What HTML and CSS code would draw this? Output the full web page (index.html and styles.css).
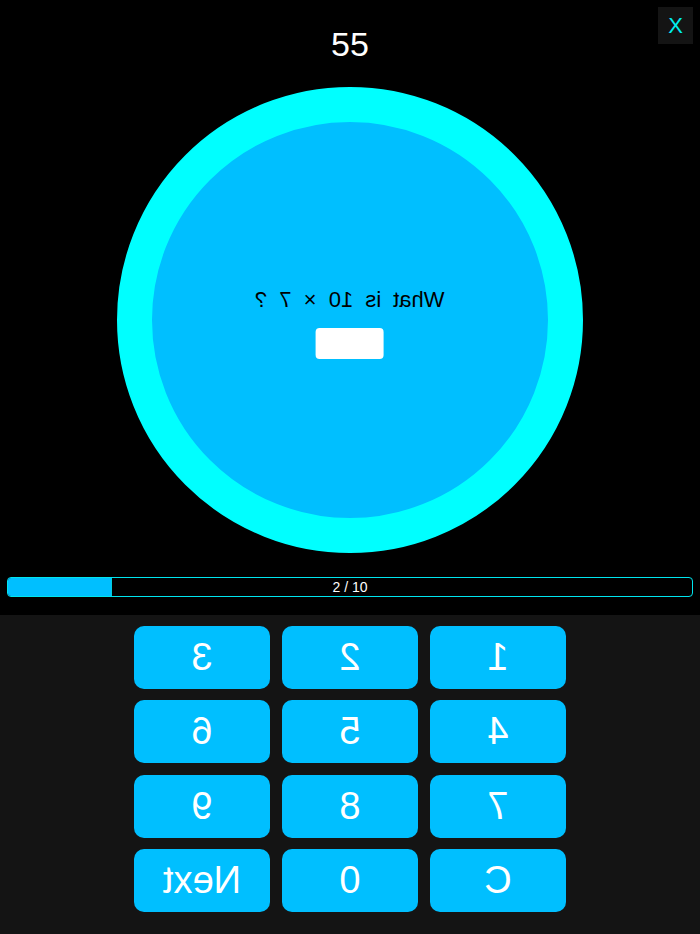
FILE: index.html
```
<!DOCTYPE html>
<html>
<head>
<meta charset="utf-8">
<link rel="stylesheet" href="styles.css">
</head>
<body>
<div class="app">
  <div class="top">
    <header class="header">
      <div class="score">55</div>
      <button class="close">X</button>
    </header>
    <div class="ring">
      <div class="ring-content">
        <div class="question">What is 10 × 7 ?</div>
        <div class="answer"></div>
      </div>
    </div>
    <div class="progress">
      <div class="progress-fill" style="width: 15%"></div>
      <div class="progress-label">2 / 10</div>
    </div>
  </div>
  <div class="keypad">
    <div class="keys">
      <button class="key">1</button>
      <button class="key">2</button>
      <button class="key">3</button>
      <button class="key">4</button>
      <button class="key">5</button>
      <button class="key">6</button>
      <button class="key">7</button>
      <button class="key">8</button>
      <button class="key">9</button>
      <button class="key">C</button>
      <button class="key">0</button>
      <button class="key">Next</button>
    </div>
  </div>
</div>
</body>
</html>
```
FILE: styles.css
```
html, body {
  margin: 0;
  padding: 0;
  background: #000;
  font-family: "Liberation Sans", Arial, sans-serif;
}

.app {
  width: 700px;
  height: 934px;
  display: flex;
  flex-direction: column;
  overflow: hidden;
}

.top {
  height: 615px;
  display: flex;
  flex-direction: column;
  align-items: center;
  background: #000;
  position: relative;
}

.header {
  height: 87px;
  width: 100%;
  display: flex;
  align-items: center;
  justify-content: center;
}

.score {
  color: #fff;
  font-size: 34px;
  line-height: 40px;
}

.close {
  position: absolute;
  top: 7px;
  right: 7px;
  width: 35px;
  height: 37px;
  padding: 0;
  border: none;
  background: #141414;
  color: #00eeee;
  font-family: "Liberation Sans", Arial, sans-serif;
  font-size: 22px;
  line-height: 37px;
}

.ring {
  box-sizing: border-box;
  width: 466px;
  height: 466px;
  border-radius: 50%;
  border: 35px solid #00ffff;
  background: #00bfff;
  display: flex;
  align-items: center;
  justify-content: center;
  padding-top: 5px;
}

.ring-content {
  display: flex;
  flex-direction: column;
  align-items: center;
  gap: 15px;
  transform: scaleX(-1);
}

.question {
  color: #000;
  font-size: 22px;
  line-height: 26px;
  word-spacing: 6px;
}

.answer {
  width: 68px;
  height: 31px;
  background: #fff;
  border-radius: 4px;
}

.progress {
  box-sizing: border-box;
  margin-top: 24px;
  width: 686px;
  height: 20px;
  border: 1.5px solid #00e5ee;
  border-radius: 4px;
  position: relative;
  overflow: hidden;
  display: flex;
  align-items: center;
  justify-content: center;
}

.progress-fill {
  position: absolute;
  left: 0;
  top: 0;
  bottom: 0;
  background: #00bfff;
  border-right: 1px solid #00ccdd;
}

.progress-label {
  position: relative;
  color: #fff;
  font-size: 14px;
  line-height: 16px;
}

.keypad {
  flex: 1;
  background: #141414;
  display: flex;
  justify-content: center;
  padding-top: 11px;
}

.keys {
  display: grid;
  grid-template-columns: repeat(3, 136px);
  grid-auto-rows: 63px;
  column-gap: 12px;
  row-gap: 11.3px;
  transform: scaleX(-1);
  align-content: start;
}

.key {
  border: none;
  border-radius: 10px;
  background: #00bfff;
  color: #fff;
  font-family: "Liberation Sans", Arial, sans-serif;
  font-size: 38px;
  padding: 0;
  display: flex;
  align-items: center;
  justify-content: center;
}
```
